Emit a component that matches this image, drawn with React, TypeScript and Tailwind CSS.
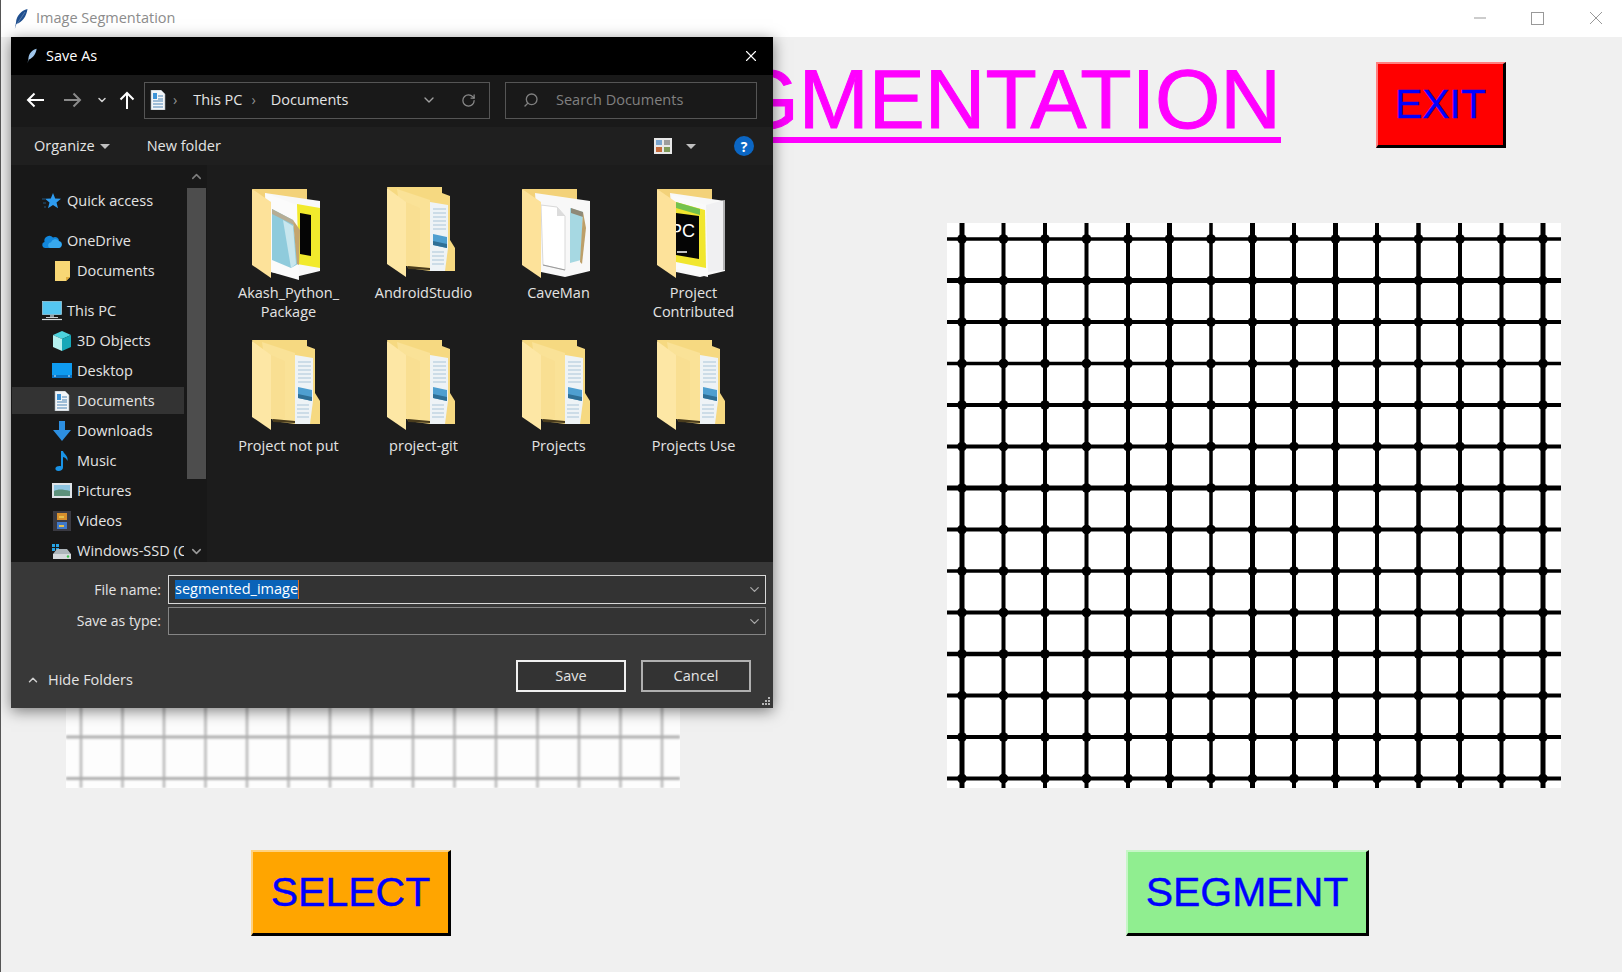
import { ReactNode } from 'react';
import { ChevronDown, ChevronUp, RotateCw, Search, X } from 'lucide-react';

const ui = "[font-family:'Open_Sans','Noto_Sans',sans-serif]";

interface NavRow {
  label: string;
  nested: boolean;
  gapBefore?: boolean;
  selected?: boolean;
  icon: ReactNode;
}

function Feather({ className }: { className: string }) {
  return (
    <svg viewBox="0 0 14 20" className={className}>
      <path d="M13.5 0C7 1.5 2.5 7 2 13.5L.8 20l1.6-5C8 13.5 12.5 7.5 13.5 0Z" fill="currentColor" />
      <path d="M11 3 3 15" stroke="#ffffff" strokeWidth="0.5" opacity="0.5" />
    </svg>
  );
}

function DocPage() {
  return (
    <svg viewBox="0 0 16 20" className="h-5 w-4">
      <path d="M1 0h10l4 4v16H1Z" fill="#f2f5f8" stroke="#9aa4ad" strokeWidth="0.6" />
      <path d="M3 3h4v6H3Z" fill="#3d94d8" />
      <path d="M8 6h5M8 9h5M3 11h10M3 14h10M3 17h10" stroke="#4d86b5" strokeWidth="1.2" />
    </svg>
  );
}

const navRows: NavRow[] = [
  {
    label: 'Quick access',
    nested: false,
    icon: (
      <svg viewBox="0 0 20 20" className="h-5 w-5">
        <path d="M11 2l2.2 5.4 5.8.4-4.5 3.700 1.500 5.700-5-3.100-5 3.100 1.500-5.700L3 7.800l5.800-.4Z" fill="#2e9cf0" />
        <path d="M0 8h3M1 12h3M2 16h2" stroke="#2e9cf0" strokeWidth="0.8" opacity="0.6" />
      </svg>
    ),
  },
  {
    label: 'OneDrive',
    nested: false,
    gapBefore: true,
    icon: (
      <svg viewBox="0 0 20 16" className="h-4 w-5">
        <path d="M3 15a3 3 0 0 1-.5-5.900A5 5 0 0 1 11 4.500a4 4 0 0 1 6 3.600A3.500 3.500 0 0 1 17 15Z" fill="#1287dc" />
        <path d="M8 15a3 3 0 0 1 1-5.800 4.500 4.500 0 0 1 8-1A3.500 3.500 0 0 1 17 15Z" fill="#38a9ee" />
      </svg>
    ),
  },
  {
    label: 'Documents',
    nested: true,
    icon: (
      <svg viewBox="0 0 18 20" className="h-5 w-[18px]">
        <path d="M2 0h15v16l-4 4H2Z" fill="#f8d775" />
        <path d="M13 20v-4h4Z" fill="#e0ad3f" />
      </svg>
    ),
  },
  {
    label: 'This PC',
    nested: false,
    gapBefore: true,
    icon: (
      <svg viewBox="0 0 20 20" className="h-5 w-5">
        <rect x="0.5" y="0.5" width="19" height="13" fill="#54c6f2" stroke="#a8d8ea" strokeWidth="0.7" />
        <path d="M8 14h4v2H8Z" fill="#8f9aa1" />
        <path d="M4 16h12v1H4Z" fill="#c8ced2" />
        <path d="M0 18.500h20" stroke="#d6dadd" strokeWidth="1.2" />
      </svg>
    ),
  },
  {
    label: '3D Objects',
    nested: true,
    icon: (
      <svg viewBox="0 0 20 20" className="h-5 w-5">
        <path d="M10 0l9 4-9 4-9-4Z" fill="#4cd3de" />
        <path d="M1 4l9 4v12l-9-4Z" fill="#b4f0ef" />
        <path d="M19 4l-9 4v12l9-4Z" fill="#16a8b8" />
      </svg>
    ),
  },
  {
    label: 'Desktop',
    nested: true,
    icon: (
      <svg viewBox="0 0 20 16" className="h-4 w-5">
        <rect width="20" height="15" fill="#0f9bf0" />
        <path d="M0 12h20v3H0Z" fill="#0a72c2" />
        <path d="M2 13h2M16 13h2" stroke="#d9efff" strokeWidth="1" />
      </svg>
    ),
  },
  { label: 'Documents', nested: true, selected: true, icon: <DocPage /> },
  {
    label: 'Downloads',
    nested: true,
    icon: (
      <svg viewBox="0 0 20 20" className="h-5 w-5">
        <path d="M7 0h6v9h6l-9 11L1 9h6Z" fill="#2d8fe0" />
      </svg>
    ),
  },
  {
    label: 'Music',
    nested: true,
    icon: (
      <svg viewBox="0 0 16 20" className="h-5 w-4">
        <path d="M7 0h2c.5 3 5.500 4.500 4.500 10-1-2.500-2.500-3.500-4.500-4v10.500c0 2-2 3.500-4.500 3.500S1 18.500 1.500 17s3-2.500 5.500-1.800Z" fill="#1993e6" />
      </svg>
    ),
  },
  {
    label: 'Pictures',
    nested: true,
    icon: (
      <svg viewBox="0 0 20 15" className="h-[15px] w-5">
        <rect width="20" height="15" fill="#dfe4e8" />
        <path d="M2 2h16v6H2Z" fill="#8fc5e2" />
        <path d="M2 8c4-2 8-2 16 0v5H2Z" fill="#5d917b" />
      </svg>
    ),
  },
  {
    label: 'Videos',
    nested: true,
    icon: (
      <svg viewBox="0 0 18 20" className="h-5 w-[18px]">
        <rect width="18" height="20" fill="#3a3a42" />
        <path d="M4 2h10v7H4Z" fill="#d68f2e" />
        <path d="M4 11h10v7H4Z" fill="#3f78c9" />
        <path d="M6 5h5v2H6ZM6 14h5v2H6Z" fill="#e5c04b" />
      </svg>
    ),
  },
  {
    label: 'Windows-SSD (C:)',
    nested: true,
    icon: (
      <svg viewBox="0 0 20 16" className="h-4 w-5">
        <path d="M0 1h3v3H0ZM4 1h3v3H4ZM0 5h3v3H0ZM4 5h3v3H4Z" fill="#26a4e6" />
        <path d="M5 6h10l4 5H1Z" fill="#aeb6bb" />
        <path d="M1 11h18v5H1Z" fill="#d5d9dc" />
        <circle cx="16" cy="13.500" r="1.200" fill="#3fc24f" />
      </svg>
    ),
  },
];

type FolderKind = 'doc' | 'note' | 'plain' | 'pc';

interface FolderItem {
  name: string[];
  kind: FolderKind;
}

const folders: FolderItem[] = [
  { name: ['Akash_Python_', 'Package'], kind: 'note' },
  { name: ['AndroidStudio'], kind: 'doc' },
  { name: ['CaveMan'], kind: 'plain' },
  { name: ['Project', 'Contributed'], kind: 'pc' },
  { name: ['Project not put'], kind: 'doc' },
  { name: ['project-git'], kind: 'doc' },
  { name: ['Projects'], kind: 'doc' },
  { name: ['Projects Use'], kind: 'doc' },
];

function FolderIcon({ kind }: { kind: FolderKind }) {
  if (kind === 'doc') {
    return (
      <svg viewBox="-1 0 90 105" className="-mb-[2px] h-[105px] w-[90px] shrink-0">
        <path d="M7 7H62V13L70 16V60L75 68V91H50L28 88Z" fill="#f6d981" />
        <path d="M50 22L68 25V68L65 91H50Z" fill="#eef3f6" />
        <path d="M53 29H66M53 33H66M53 37H66M53 41H66M53 45H66M53 49H66M52 72H64M52 76H64M52 80H64M52 84H64" stroke="#a9c6d8" strokeWidth="1.200" />
        <path d="M53 54L67 57V68L53 65Z" fill="#4f9fd0" />
        <path d="M53 61L67 64V68L53 65Z" fill="#2f6f96" />
        <path d="M17 9L50 20V88L28 86Z" fill="#fae297" />
        <path d="M28 86L50 88V90L28 89Z" fill="#4a3c1c" />
        <path d="M7 8L26 22V97L7 84Z" fill="#fde7a5" />
        <path d="M26 22L40 28V86L26 86Z" fill="#f9df92" />
      </svg>
    );
  }
  return (
    <svg viewBox="-1 0 90 105" className="-mb-[2px] h-[105px] w-[90px] shrink-0">
      <path d="M7 9H62V24L26 40Z" fill="#f3d27a" />
      <path d="M20 13L75 21V91L50 97L26 92Z" fill="#f8f8f8" />
      {kind === 'note' && (
        <>
          <path d="M52 24L75 28V88L52 84Z" fill="#f2ea2c" />
          <path d="M55 33L66 35V76L55 74Z" fill="#050505" />
          <path d="M20 13L52 25L54 100L26 92Z" fill="#fbfbfb" />
          <path d="M27 29L48 40L53 84L46 88L27 80Z" fill="#8fcbdc" />
          <path d="M38 40L48 46L51 84L46 88Z" fill="#c8e6ee" />
          <path d="M27 29L48 40L49 45L27 34Z" fill="#b6ad95" />
          <path d="M48 40L55 50L54 85L52 84Z" fill="#c4a56f" />
        </>
      )}
      {kind === 'plain' && (
        <>
          <path d="M55 28L68 32L66 80L55 83Z" fill="#a6d8e2" />
          <path d="M56 28L68 32L68 37L56 33Z" fill="#8f8a78" />
          <path d="M68 32L71 48L67 84L65 82Z" fill="#bd9f68" />
          <path d="M26 25L42 27L50 36V90L28 85Z" fill="#ffffff" stroke="#d8d8d8" strokeWidth="1" />
          <path d="M42 27V36H50Z" fill="#dcdcdc" />
          <path d="M28 85L50 90" stroke="#9a9a9a" strokeWidth="1.200" />
        </>
      )}
      {kind === 'pc' && (
        <>
          <path d="M22 15L56 25L58 97L26 89Z" fill="#fafafa" />
          <path d="M26 22L55 30L56 88L26 82Z" fill="#f1e62e" />
          <path d="M26 22L50 29V35L26 28Z" fill="#74c24e" />
          <path d="M26 33L49 36V79L26 75Z" fill="#050505" />
          <text x="20" y="57" fill="#ffffff" fontSize="18" fontFamily="'Liberation Sans', sans-serif">
            PC
          </text>
          <path d="M27 72H37" stroke="#ffffff" strokeWidth="1.500" />
          <path d="M56 25L75 20V90L58 92Z" fill="#f0f0f2" />
          <path d="M74 20V90" stroke="#777" strokeWidth="1" />
        </>
      )}
      <path d="M7 9L26 22V98L7 85Z" fill="#fde29a" />
    </svg>
  );
}

const gridX = Array.from({ length: 15 }, (_, i) => 15 + i * 41.5);
const gridY = Array.from({ length: 14 }, (_, i) => 16 + i * 41.5);
const widthsX = [5, 4, 4, 4, 4, 5, 3.5, 5, 4, 5, 4, 4.5, 4, 4, 5];
const widthsY = [3.5, 5, 4, 3.5, 4, 4, 5, 4, 3.5, 4, 4.5, 4, 4, 4];

function SourceGrid() {
  return (
    <svg viewBox="0 0 614 565" className="h-full w-full">
      <defs>
        <filter id="soft">
          <feGaussianBlur stdDeviation="1.1" />
        </filter>
      </defs>
      <rect width="614" height="565" fill="#fdfdfd" />
      <g filter="url(#soft)">
        {gridX.map(x => (
          <path key={x} d={`M${x} 0V565`} stroke="#b8b8b8" strokeWidth="2.500" />
        ))}
        {gridY.map(y => (
          <path key={y} d={`M0 ${y}H614`} stroke="#adadad" strokeWidth="3" />
        ))}
      </g>
    </svg>
  );
}

function SegmentedGrid() {
  return (
    <svg viewBox="0 0 614 565" className="h-full w-full">
      <rect width="614" height="565" fill="#ffffff" />
      {gridX.map((x, i) => (
        <path key={x} d={`M${x} 0V565`} stroke="#000000" strokeWidth={widthsX[i]} />
      ))}
      {gridY.map((y, i) => (
        <path key={y} d={`M0 ${y}H614`} stroke="#000000" strokeWidth={widthsY[i]} />
      ))}
      {gridX.map(x =>
        gridY.map(y => <circle key={`${x}-${y}`} cx={x} cy={y} r="4.800" fill="#000000" />)
      )}
    </svg>
  );
}

function SaveDialog() {
  return (
    <div className={`${ui} absolute left-[10px] top-[37px] flex h-[671px] w-[762px] flex-col bg-[#191919] text-[14.5px] text-[#e4e4e4] shadow-[0_3px_14px_rgba(0,0,0,0.5)]`}>
      <div className="flex h-[38px] shrink-0 items-center bg-black pl-[16px] pr-[13px] text-white">
        <Feather className="h-[16px] w-[10px] text-[#9cc4ea]" />
        <span className="ml-[9px]">Save As</span>
        <X size={18} strokeWidth={1.5} className="ml-auto" />
      </div>

      <div className="flex h-[52px] shrink-0 items-center pb-[2px] pl-[15px]">
        <svg viewBox="0 0 18 16" className="h-4 w-[18px]" fill="none" stroke="#ffffff" strokeWidth="2">
          <path d="M18 8H2M8.500 1.500 2 8l6.500 6.500" />
        </svg>
        <svg viewBox="0 0 18 16" className="ml-[20px] h-4 w-[18px]" fill="none" stroke="#8a8a8a" strokeWidth="2">
          <path d="M0 8h16M9.500 1.500 16 8l-6.500 6.500" />
        </svg>
        <ChevronDown size={12} strokeWidth={3} className="ml-[14px] text-[#d0d0d0]" />
        <svg viewBox="0 0 16 18" className="ml-[11px] h-[18px] w-4" fill="none" stroke="#ffffff" strokeWidth="2">
          <path d="M8 18V2M1.500 8.500 8 2l6.500 6.500" />
        </svg>
        <div className="ml-[9px] flex h-[37px] w-[346px] items-center border border-[#555555] pl-[5px]">
          <DocPage />
          <span className="ml-[7px] text-[#909090]">›</span>
          <span className="ml-[16px]">This PC</span>
          <span className="ml-[9px] text-[#909090]">›</span>
          <span className="ml-[15px]">Documents</span>
          <ChevronDown size={16} className="ml-auto text-[#a0a0a0]" />
          <RotateCw size={15} className="ml-[24px] mr-[13px] text-[#8a8a8a]" />
        </div>
        <div className="ml-[15px] flex h-[37px] w-[252px] items-center border border-[#555555] pl-[17px] text-[#808080]">
          <Search size={16} className="-scale-x-100" />
          <span className="ml-[17px]">Search Documents</span>
        </div>
      </div>

      <div className="flex h-[38px] shrink-0 items-center bg-[#1f1f1f] pl-[23px] pr-[19px]">
        <span>Organize</span>
        <span className="ml-[5px] h-0 w-0 border-x-[5px] border-t-[5px] border-x-transparent border-t-[#c0c0c0]" />
        <span className="ml-[37px]">New folder</span>
        <svg viewBox="0 0 18 16" className="ml-auto h-4 w-[18px]">
          <rect width="18" height="16" fill="#e8e8e8" />
          <path d="M2 2h6v5H2Z" fill="#7aa5cf" />
          <path d="M10 2h6v5h-6Z" fill="#9c9c9c" />
          <path d="M2 9h6v5H2Z" fill="#c46a3c" />
          <path d="M10 9h6v5h-6Z" fill="#7f9a5a" />
        </svg>
        <span className="ml-[14px] h-0 w-0 border-x-[5px] border-t-[5px] border-x-transparent border-t-[#c0c0c0]" />
        <span className="ml-[38px] flex h-[20px] w-[20px] items-center justify-center rounded-full bg-[#0b66c3] text-[14px] font-bold text-white">
          ?
        </span>
      </div>

      <div className="flex min-h-0 flex-1">
        <div className="w-[173px] shrink-0 overflow-hidden bg-[#181818] pl-px pt-[22px]">
          {navRows.map((row, index) => (
            <div
              key={index}
              className={`mb-[3px] flex h-[27px] items-center gap-[5px] whitespace-nowrap ${row.nested ? 'pl-[40px]' : 'pl-[30px]'} ${row.gapBefore ? 'mt-[13px]' : ''} ${row.selected ? 'bg-[#333333]' : ''}`}
            >
              <span className="flex h-5 w-5 shrink-0 items-center justify-center">{row.icon}</span>
              <span>{row.label}</span>
            </div>
          ))}
        </div>
        <div className="flex w-[23px] shrink-0 flex-col items-center bg-[#181818] pl-[3px] pr-px">
          <div className="flex h-[23px] items-center">
            <ChevronUp size={15} strokeWidth={2.500} className="text-[#7d7d7d]" />
          </div>
          <div className="h-[291px] w-[19px] bg-[#4d4d4d]" />
          <ChevronDown size={15} strokeWidth={2.500} className="mt-auto mb-[3px] text-[#9a9a9a]" />
        </div>
        <div className="grid flex-1 grid-cols-[repeat(4,135px)] content-start bg-[#1c1c1c] pl-[14px] pt-[15px]">
          {folders.map(folder => (
            <div key={folder.name.join('')} className="flex h-[153px] flex-col items-center text-center leading-[19px]">
              <FolderIcon kind={folder.kind} />
              {folder.name.map(line => (
                <span key={line}>{line}</span>
              ))}
            </div>
          ))}
        </div>
      </div>

      <div className="relative flex h-[146px] shrink-0 flex-col bg-[#383838] pl-[7px] pt-[13px]">
        <div className="flex h-[29px] items-center">
          <span className="w-[143px] pb-px text-right text-[14px]">File name:</span>
          <div className="ml-[7px] flex h-[29px] w-[598px] items-center border-[1.5px] border-[#d8d8d8] bg-[#333333] pl-[6px] pr-[3px]">
            <span className="h-[19px] border-r border-[#e07020] bg-[#0a63b8] leading-[18px] text-white">segmented_image</span>
            <ChevronDown size={15} className="ml-auto text-[#a8a8a8]" />
          </div>
        </div>
        <div className="mt-[3px] flex h-[28px] items-center">
          <span className="w-[143px] pb-px text-right text-[14px]">Save as type:</span>
          <div className="ml-[7px] flex h-[28px] w-[598px] items-center justify-end border border-[#858585] bg-[#333333] pr-[3px]">
            <ChevronDown size={15} className="text-[#a8a8a8]" />
          </div>
        </div>
        <div className="mt-[25px] flex items-center pl-[8px] pr-[22px]">
          <ChevronUp size={14} strokeWidth={2.500} className="mt-[8px] text-[#d0d0d0]" />
          <span className="ml-[8px] mt-[8px]">Hide Folders</span>
          <button className="ml-auto h-[32px] w-[110px] border-2 border-[#f0f0f0] bg-[#333333]">Save</button>
          <button className="ml-[15px] h-[32px] w-[110px] border-2 border-[#b0b0b0] bg-[#333333]">Cancel</button>
        </div>
        <svg viewBox="0 0 10 10" className="absolute bottom-[1px] right-[2px] h-[10px] w-[10px]" fill="#b5b5b5">
          <path d="M7 0h2v2H7ZM4 3h2v2H4ZM7 3h2v2H7ZM1 6h2v2H1ZM4 6h2v2H4ZM7 6h2v2H7Z" />
        </svg>
      </div>
    </div>
  );
}

export default function App() {
  return (
    <div className="relative h-[972px] w-[1622px] overflow-hidden border-l border-[#555555] bg-[#f0f0f0] [font-family:'Liberation_Sans',Arial,sans-serif]">
      <div className="flex h-[37px] items-center bg-white pl-[13px] pr-[20px]">
        <Feather className="h-[20px] w-[14px] text-[#1f4f8f]" />
        <span className={`${ui} ml-[8px] pb-[2px] text-[14.5px] text-[#8c8c8c]`}>Image Segmentation</span>
        <svg viewBox="0 0 128 14" className="mb-[2px] ml-auto h-[14px] w-[128px]" fill="none" stroke="#999999" strokeWidth="1">
          <path d="M0 7H12" />
          <rect x="57.500" y="1.500" width="12" height="12" />
          <path d="M116 1 128 13M128 1 116 13" />
        </svg>
      </div>

      <div className="flex h-[186px] items-start">
        <div className="flex w-[1280px] shrink-0 justify-end pt-[14px]">
          <h1 className="whitespace-nowrap text-[84px] font-normal leading-[96px] text-[#ff00ff] underline decoration-[6px] underline-offset-[9px] [-webkit-text-stroke:1px_#ff00ff] [text-decoration-skip-ink:none]">
            IMAGE SEGMENTATION
          </h1>
        </div>
        <button className="ml-[95px] mt-[25px] h-[86px] w-[130px] border-b-[3px] border-l-2 border-r-[3px] border-t-2 border-b-black border-l-[#ff8080] border-r-black border-t-[#ff8080] bg-[#ff0000] text-[41px] text-[#0000ff] [-webkit-text-stroke:0.4px_#0000ff]">
          EXIT
        </button>
      </div>

      <div className="flex gap-[267px] pl-[65px]">
        <div className="h-[565px] w-[614px]">
          <SourceGrid />
        </div>
        <div className="h-[565px] w-[614px]">
          <SegmentedGrid />
        </div>
      </div>

      <div className="mt-[62px] flex gap-[675px] pl-[250px]">
        <button className="h-[86px] w-[200px] border-b-[3px] border-l-2 border-r-[3px] border-t-2 border-b-black border-l-[#ffd27f] border-r-black border-t-[#ffd27f] bg-[#ffa500] text-[41px] text-[#0000ff] [-webkit-text-stroke:0.4px_#0000ff]">
          SELECT
        </button>
        <button className="h-[86px] w-[243px] border-b-[3px] border-l-2 border-r-[3px] border-t-2 border-b-black border-l-[#c7f6c7] border-r-black border-t-[#c7f6c7] bg-[#90ee90] text-[41px] text-[#0000ff] [-webkit-text-stroke:0.4px_#0000ff]">
          SEGMENT
        </button>
      </div>

      <SaveDialog />
    </div>
  );
}
